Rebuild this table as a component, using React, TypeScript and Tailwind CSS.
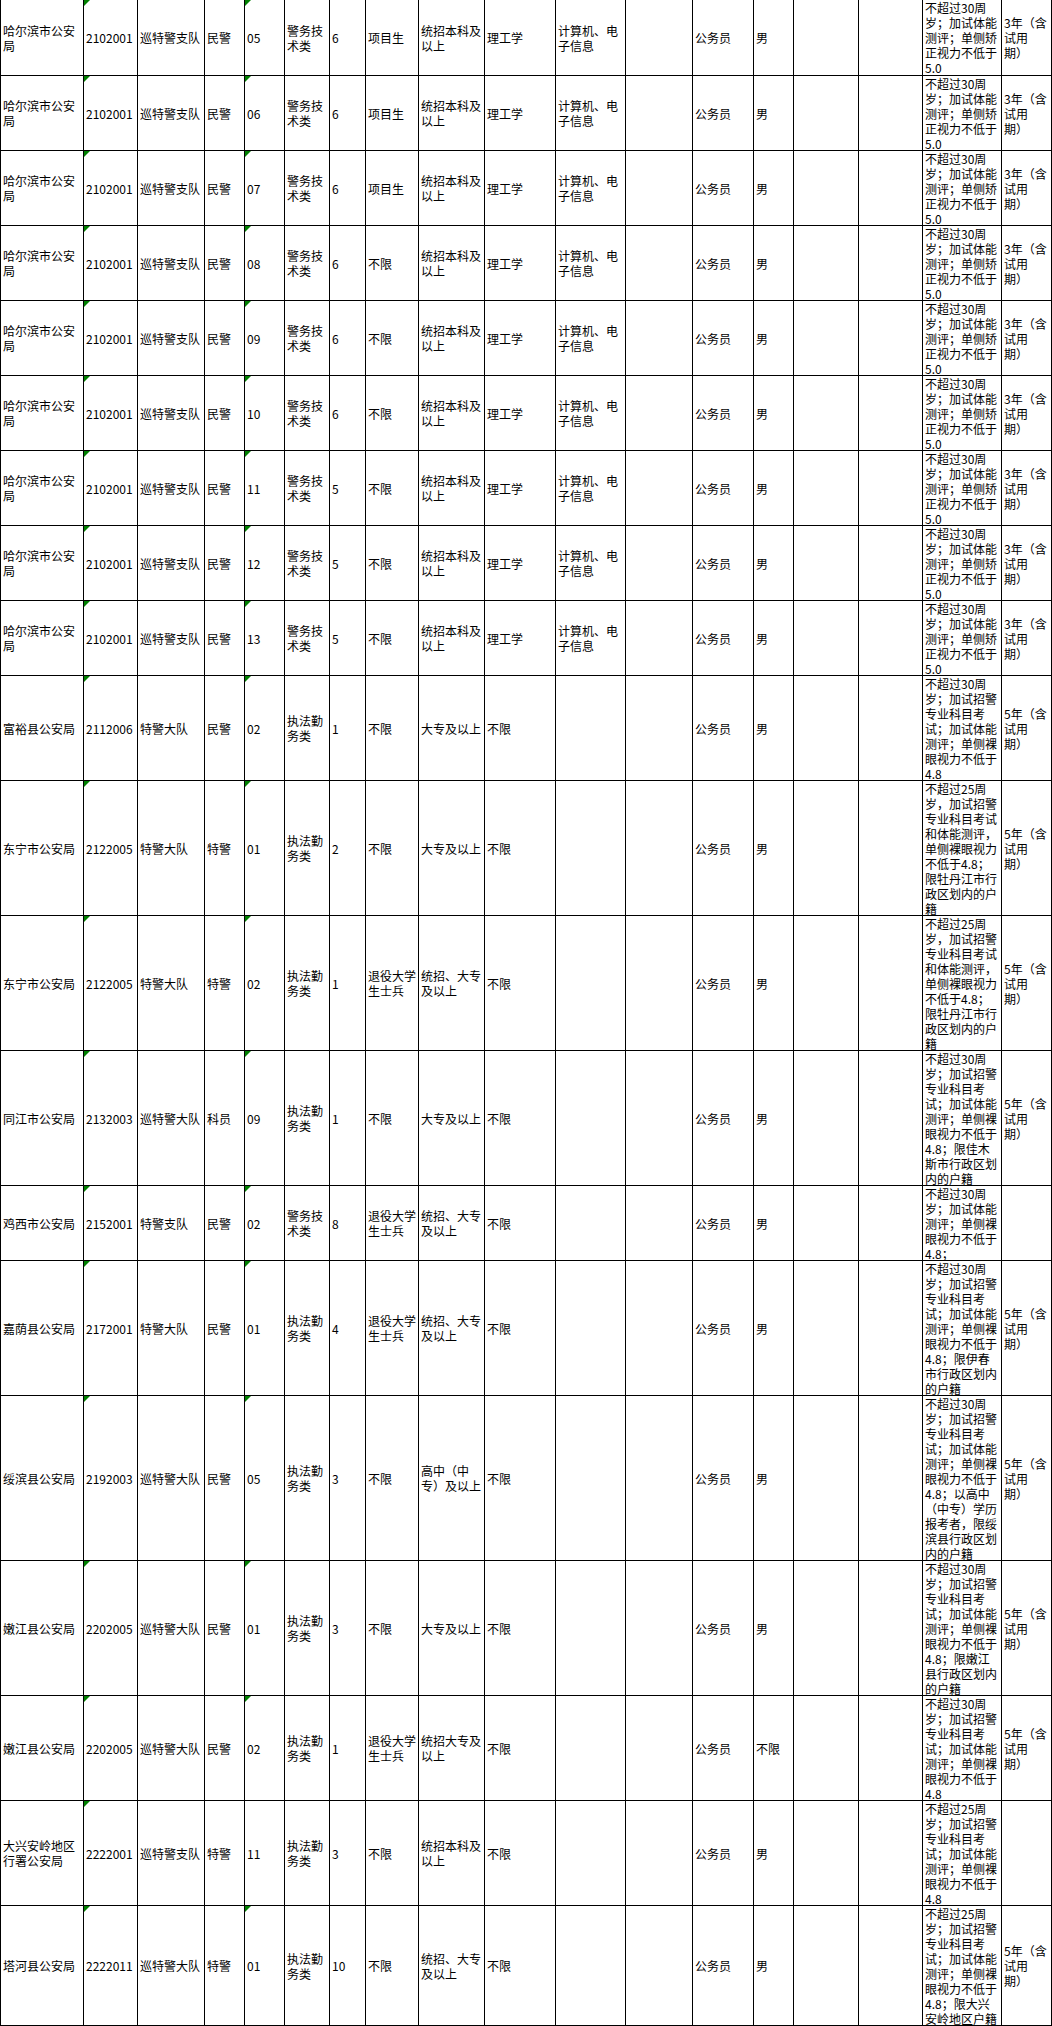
import React from "react";

type Cell = string | string[];
type Row = { h: string; cells: Cell[]; flag4?: boolean };

const TERM3 = ["3年（含", "试用", "期）"];
const TERM5 = ["5年（含", "试用", "期）"];
const ZHIFA = ["执法勤", "务类"];
const JISHU = ["警务技", "术类"];
const TUIYI = ["退役大学", "生士兵"];
const TONGZHAO_DZ = ["统招、大专", "及以上"];
const TONGZHAO_BK = ["统招本科及", "以上"];

const harbin = (code: string, n: string, kind: string): Row => ({
  h: "h-[75px]",
  cells: [
    ["哈尔滨市公安", "局"],
    "2102001",
    "巡特警支队",
    "民警",
    code,
    JISHU,
    n,
    kind,
    TONGZHAO_BK,
    "理工学",
    ["计算机、电", "子信息"],
    "",
    "公务员",
    "男",
    "",
    "",
    ["不超过30周", "岁；加试体能", "测评；单侧矫", "正视力不低于", "5.0"],
    TERM3,
  ],
});

const rows: Row[] = [
  { ...harbin("05", "6", "项目生"), h: "h-[76px]" },
  harbin("06", "6", "项目生"),
  harbin("07", "6", "项目生"),
  harbin("08", "6", "不限"),
  harbin("09", "6", "不限"),
  harbin("10", "6", "不限"),
  harbin("11", "5", "不限"),
  harbin("12", "5", "不限"),
  harbin("13", "5", "不限"),
  {
    h: "h-[105px]",
    cells: [
      "富裕县公安局", "2112006", "特警大队", "民警", "02", ZHIFA, "1", "不限", "大专及以上", "不限", "", "",
      "公务员", "男", "", "",
      ["不超过30周", "岁；加试招警", "专业科目考", "试；加试体能", "测评；单侧裸", "眼视力不低于", "4.8"],
      TERM5,
    ],
  },
  {
    h: "h-[135px]",
    cells: [
      "东宁市公安局", "2122005", "特警大队", "特警", "01", ZHIFA, "2", "不限", "大专及以上", "不限", "", "",
      "公务员", "男", "", "",
      ["不超过25周", "岁，加试招警", "专业科目考试", "和体能测评，", "单侧裸眼视力", "不低于4.8；", "限牡丹江市行", "政区划内的户", "籍"],
      TERM5,
    ],
  },
  {
    h: "h-[135px]",
    cells: [
      "东宁市公安局", "2122005", "特警大队", "特警", "02", ZHIFA, "1", TUIYI, TONGZHAO_DZ, "不限", "", "",
      "公务员", "男", "", "",
      ["不超过25周", "岁，加试招警", "专业科目考试", "和体能测评，", "单侧裸眼视力", "不低于4.8；", "限牡丹江市行", "政区划内的户", "籍"],
      TERM5,
    ],
  },
  {
    h: "h-[135px]",
    cells: [
      "同江市公安局", "2132003", "巡特警大队", "科员", "09", ZHIFA, "1", "不限", "大专及以上", "不限", "", "",
      "公务员", "男", "", "",
      ["不超过30周", "岁；加试招警", "专业科目考", "试；加试体能", "测评；单侧裸", "眼视力不低于", "4.8；限佳木", "斯市行政区划", "内的户籍"],
      TERM5,
    ],
  },
  {
    h: "h-[75px]",
    cells: [
      "鸡西市公安局", "2152001", "特警支队", "民警", "02", JISHU, "8", TUIYI, TONGZHAO_DZ, "不限", "", "",
      "公务员", "男", "", "",
      ["不超过30周", "岁；加试体能", "测评；单侧裸", "眼视力不低于", "4.8；"],
      "",
    ],
  },
  {
    h: "h-[135px]",
    cells: [
      "嘉荫县公安局", "2172001", "特警大队", "民警", "01", ZHIFA, "4", TUIYI, TONGZHAO_DZ, "不限", "", "",
      "公务员", "男", "", "",
      ["不超过30周", "岁；加试招警", "专业科目考", "试；加试体能", "测评；单侧裸", "眼视力不低于", "4.8；限伊春", "市行政区划内", "的户籍"],
      TERM5,
    ],
  },
  {
    h: "h-[165px]",
    cells: [
      "绥滨县公安局", "2192003", "巡特警大队", "民警", "05", ZHIFA, "3", "不限", ["高中（中", "专）及以上"], "不限", "", "",
      "公务员", "男", "", "",
      ["不超过30周", "岁；加试招警", "专业科目考", "试；加试体能", "测评；单侧裸", "眼视力不低于", "4.8；以高中", "（中专）学历", "报考者，限绥", "滨县行政区划", "内的户籍"],
      TERM5,
    ],
  },
  {
    h: "h-[135px]",
    cells: [
      "嫩江县公安局", "2202005", "巡特警大队", "民警", "01", ZHIFA, "3", "不限", "大专及以上", "不限", "", "",
      "公务员", "男", "", "",
      ["不超过30周", "岁；加试招警", "专业科目考", "试；加试体能", "测评；单侧裸", "眼视力不低于", "4.8；限嫩江", "县行政区划内", "的户籍"],
      TERM5,
    ],
  },
  {
    h: "h-[105px]",
    cells: [
      "嫩江县公安局", "2202005", "巡特警大队", "民警", "02", ZHIFA, "1", TUIYI, ["统招大专及", "以上"], "不限", "", "",
      "公务员", "不限", "", "",
      ["不超过30周", "岁；加试招警", "专业科目考", "试；加试体能", "测评；单侧裸", "眼视力不低于", "4.8"],
      TERM5,
    ],
  },
  {
    h: "h-[105px]",
    flag4: false,
    cells: [
      ["大兴安岭地区", "行署公安局"], "2222001", "巡特警支队", "特警", "11", ZHIFA, "3", "不限", TONGZHAO_BK, "不限", "", "",
      "公务员", "男", "", "",
      ["不超过25周", "岁；加试招警", "专业科目考", "试；加试体能", "测评；单侧裸", "眼视力不低于", "4.8"],
      "",
    ],
  },
  {
    h: "h-[120px]",
    cells: [
      "塔河县公安局", "2222011", "巡特警大队", "特警", "01", ZHIFA, "10", "不限", TONGZHAO_DZ, "不限", "", "",
      "公务员", "男", "", "",
      ["不超过25周", "岁；加试招警", "专业科目考", "试；加试体能", "测评；单侧裸", "眼视力不低于", "4.8；限大兴", "安岭地区户籍"],
      TERM5,
    ],
  },
];

function Flag() {
  return (
    <span className="absolute top-0 left-0 h-0 w-0 border-t-[6px] border-r-[6px] border-t-[#008000] border-r-transparent" />
  );
}

function TableCell({ value, flag }: { value: Cell; flag: boolean }) {
  const lines = Array.isArray(value) ? value : [value];
  return (
    <div className="relative flex items-center overflow-hidden border-r border-b border-black pl-[2px]">
      {flag && <Flag />}
      <div className="whitespace-nowrap">
        {lines.map((line, i) => (
          <div key={i}>{line}</div>
        ))}
      </div>
    </div>
  );
}

export default function App() {
  return (
    <div
      className="w-[1052px] bg-white text-black text-[12px] leading-[15px]"
      style={{ fontFamily: '"Noto Sans CJK SC", "Noto Sans", sans-serif' }}
    >
      <div className="border-l border-black">
        {rows.map((row, r) => (
          <div
            key={r}
            className={`grid grid-cols-[83px_54px_67px_40px_40px_45px_36px_53px_66px_71px_70px_67px_61px_40px_65px_64px_79px_50px] ${row.h}`}
          >
            {row.cells.map((c, i) => (
              <TableCell
                key={i}
                value={c}
                flag={i === 1 || (i === 4 && row.flag4 !== false)}
              />
            ))}
          </div>
        ))}
      </div>
    </div>
  );
}
